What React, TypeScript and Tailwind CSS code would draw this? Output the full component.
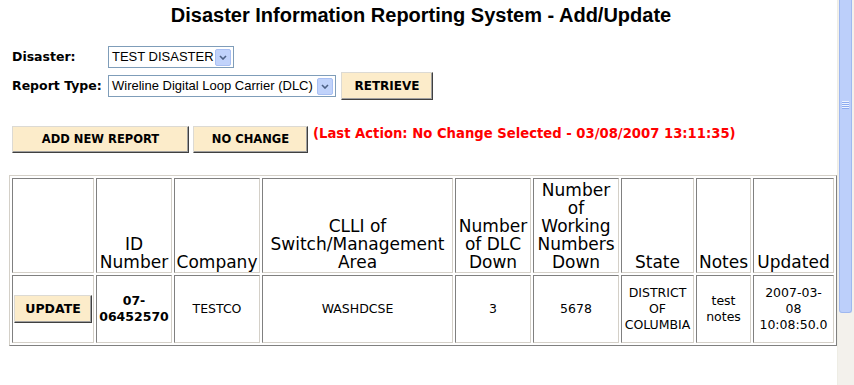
import React from "react";

const verdana = "font-['DejaVu_Sans',Verdana,sans-serif]";
const arial = "font-['Liberation_Sans',Arial,sans-serif]";

function Btn({ children, className }: { children: React.ReactNode; className: string }) {
  return (
    <button
      className={`${verdana} flex items-center justify-center border border-t-[#dcdad4] border-l-[#dcdad4] border-b-[#404040] border-r-[#404040] bg-[#fcecca] font-bold text-black shadow-[inset_-1px_-1px_0_#a0a0a0] ${className}`}
    >
      {children}
    </button>
  );
}

function Select({ value, className }: { value: string; className: string }) {
  return (
    <div className={`${arial} flex h-[22px] items-center border border-[#7f9db9] bg-white pl-[3px] pr-[2px] text-[13px] font-normal text-black ${className}`}>
      <span className="whitespace-nowrap">{value}</span>
      <span className="ml-auto flex h-[17px] w-[16px] items-center justify-center rounded-[2px] border border-[#a9c0f3] bg-[#c1d3fb]">
        <svg width="8" height="5" viewBox="0 0 8 5">
          <path d="M1 1l3 3 3-3" stroke="#4d6185" strokeWidth="1.6" fill="none" />
        </svg>
      </span>
    </div>
  );
}

const headCell =
  "border border-t-[#808080] border-l-[#808080] border-b-[#d4d0c8] border-r-[#d4d0c8] p-[1px] h-[95px] align-bottom text-center font-normal text-[17px] leading-[18px]";
const dataCell =
  "border border-t-[#808080] border-l-[#808080] border-b-[#d4d0c8] border-r-[#d4d0c8] p-[1px] h-[68px] align-middle text-center text-[12.5px] font-normal leading-[16px]";

export default function App() {
  return (
    <div className="flex h-[385px] w-[854px] overflow-hidden bg-white text-black">
      <main className="min-w-0 flex-1">
        <h1 className={`${arial} pl-[5px] pt-[4px] text-center text-[20px] font-bold leading-[23px]`}>
          Disaster Information Reporting System - Add/Update
        </h1>

        <div className={`${verdana} mt-[19px] flex flex-col gap-[4px] pl-[12px] text-[12.5px] font-bold`}>
          <div className="flex items-center">
            <span className="w-[96px]">Disaster:</span>
            <Select value="TEST DISASTER" className="w-[126px]" />
          </div>
          <div className="flex items-center">
            <span className="w-[96px]">Report Type:</span>
            <Select value="Wireline Digital Loop Carrier (DLC)" className="w-[228px]" />
            <Btn className="ml-[5px] h-[28px] w-[92px] text-[12px]">RETRIEVE</Btn>
          </div>
        </div>

        <div className="mt-[26px] flex items-start pl-[12px]">
          <Btn className="h-[27px] w-[177px] text-[11.5px]">ADD NEW REPORT</Btn>
          <Btn className="ml-[4px] h-[27px] w-[115px] text-[11.5px]">NO CHANGE</Btn>
          <span className={`${verdana} ml-[5px] text-[13.2px] font-bold leading-[16px] text-[#ff0000]`}>
            (Last Action: No Change Selected - 03/08/2007 13:11:35)
          </span>
        </div>

        <table
          className={`${verdana} ml-[9px] mt-[22px] w-[828px] table-fixed border-separate border-spacing-[2px] border border-t-[#d4d0c8] border-l-[#d4d0c8] border-b-[#808080] border-r-[#808080]`}
        >
          <thead>
            <tr>
              <th className={`${headCell} w-[82px]`}></th>
              <th className={`${headCell} w-[76px]`}>ID Number</th>
              <th className={`${headCell} w-[86px]`}>Company</th>
              <th className={`${headCell} w-[191px]`}>CLLI of Switch/Management Area</th>
              <th className={`${headCell} w-[76px]`}>Number of DLC Down</th>
              <th className={`${headCell} w-[86px]`}>Number of Working Numbers Down</th>
              <th className={`${headCell} w-[73px]`}>State</th>
              <th className={`${headCell} w-[55px]`}>Notes</th>
              <th className={`${headCell} w-[81px]`}>Updated</th>
            </tr>
          </thead>
          <tbody>
            <tr>
              <td className={dataCell}>
                <div className="flex justify-center">
                  <Btn className="h-[28px] w-[78px] text-[12.5px]">UPDATE</Btn>
                </div>
              </td>
              <td className={`${dataCell} !font-bold`}>
                07-
                <br />
                06452570
              </td>
              <td className={dataCell}>TESTCO</td>
              <td className={dataCell}>WASHDCSE</td>
              <td className={dataCell}>3</td>
              <td className={dataCell}>5678</td>
              <td className={dataCell}>DISTRICT OF COLUMBIA</td>
              <td className={dataCell}>test notes</td>
              <td className={dataCell}>
                2007-03-
                <br />
                08
                <br />
                10:08:50.0
              </td>
            </tr>
          </tbody>
        </table>
      </main>

      {/* window scrollbar, cut off at the top */}
      <div className="flex w-[17px] shrink-0 flex-col border-l border-[#eeede5] bg-[#f3f1ec] pl-[1px] pr-[2px]">
        <div className="flex h-[313px] w-[13px] flex-col items-center rounded-b-[3px] border border-t-0 border-[#9fb8f0] bg-[#bccffa] pt-[101px]">
          <div className="h-[1px] w-[7px] bg-[#eef4fe] shadow-[0_1px_0_#8cabf0]" />
          <div className="mt-[1px] h-[1px] w-[7px] bg-[#eef4fe] shadow-[0_1px_0_#8cabf0]" />
          <div className="mt-[1px] h-[1px] w-[7px] bg-[#eef4fe] shadow-[0_1px_0_#8cabf0]" />
          <div className="mt-[1px] h-[1px] w-[7px] bg-[#eef4fe] shadow-[0_1px_0_#8cabf0]" />
        </div>
      </div>
    </div>
  );
}
